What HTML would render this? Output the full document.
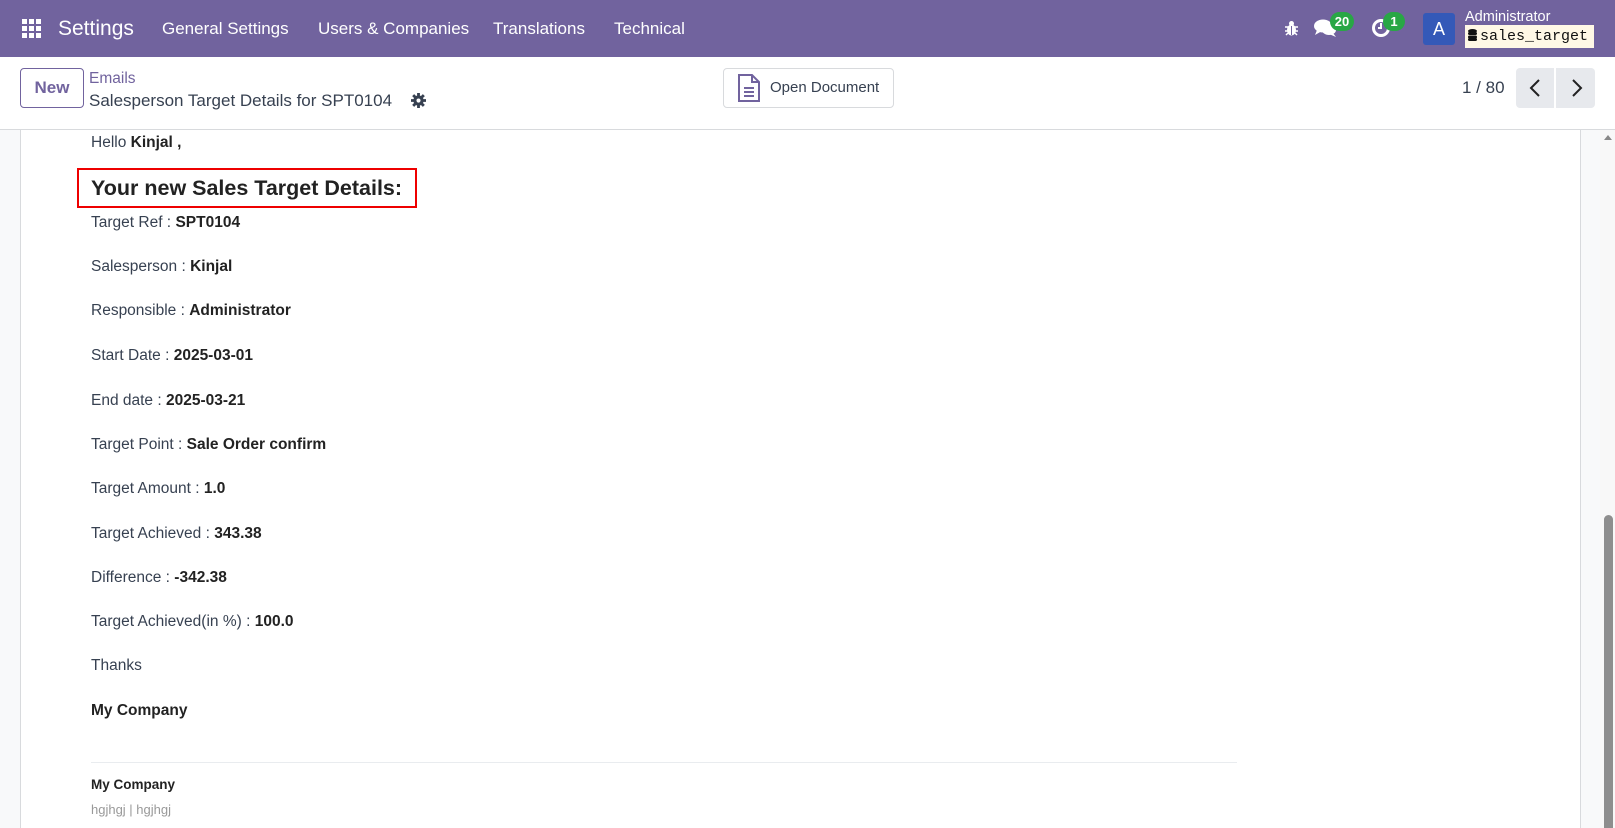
<!DOCTYPE html>
<html><head><meta charset="utf-8"><style>
*{box-sizing:border-box;margin:0;padding:0}
body{width:1615px;height:828px;overflow:hidden;font-family:"Liberation Sans",sans-serif;background:#f8f9fa;position:relative;color:#374151}
.nav{position:absolute;left:0;top:0;width:1615px;height:57px;background:#71639e;color:#fff}
.nav span{position:absolute;top:19px;font-size:17px}
.cp{position:absolute;left:0;top:57px;width:1615px;height:73px;background:#fff;border-bottom:1px solid #d8dadd}
.abs{position:absolute}
.content{position:absolute;left:20px;top:130px;width:1561px;height:698px;background:#fff;border-left:1px solid #d8dadd;border-right:1px solid #d8dadd}
.l{position:absolute;left:70px;font-size:15.5px;color:#374151}
.l b{color:#222}
</style></head><body>
<div class="nav">
  <svg class="abs" style="left:22px;top:19px" width="20" height="20" viewBox="0 0 20 20" fill="#fff"><rect x="0" y="0" width="5" height="5"/><rect x="7" y="0" width="5" height="5"/><rect x="14" y="0" width="5" height="5"/><rect x="0" y="7" width="5" height="5"/><rect x="7" y="7" width="5" height="5"/><rect x="14" y="7" width="5" height="5"/><rect x="0" y="14" width="5" height="5"/><rect x="7" y="14" width="5" height="5"/><rect x="14" y="14" width="5" height="5"/></svg>
  <span style="left:58px;top:17px;font-size:21px">Settings</span>
  <span style="left:162px">General Settings</span>
  <span style="left:318px">Users &amp; Companies</span>
  <span style="left:493px">Translations</span>
  <span style="left:614px">Technical</span>
  <svg class="abs" style="left:1284px;top:20px" width="15" height="16" viewBox="0 0 15 16" fill="#fff"><ellipse cx="7.5" cy="10" rx="4.5" ry="5.5"/><circle cx="7.5" cy="3.5" r="2.5"/><path d="M1 7h13M1 11h13M2 15l2-2M13 15l-2-2" stroke="#fff" stroke-width="1.5"/><path d="M7.5 6v9" stroke="#71639e" stroke-width="1"/></svg>
  <svg class="abs" style="left:1314px;top:18px" width="24" height="20" viewBox="0 0 24 20" fill="#fff"><ellipse cx="9" cy="8" rx="9" ry="6.5"/><path d="M3 12 L1 17 L8 13Z"/><ellipse cx="15" cy="12" rx="7" ry="5"/><path d="M19 15 L22 19 L15 16Z"/></svg>
  <div class="abs" style="left:1330px;top:12px;width:24px;height:19px;border-radius:10px;background:#28a745;font-size:13px;font-weight:bold;text-align:center;line-height:19px">20</div>
  <svg class="abs" style="left:1371px;top:18px" width="20" height="20" viewBox="0 0 20 20"><circle cx="10" cy="10" r="7.5" fill="none" stroke="#fff" stroke-width="3"/><path d="M10 5v5h-3" stroke="#fff" stroke-width="2" fill="none"/></svg>
  <div class="abs" style="left:1383px;top:12px;width:22px;height:19px;border-radius:10px;background:#28a745;font-size:13px;font-weight:bold;text-align:center;line-height:19px">1</div>
  <div class="abs" style="left:1423px;top:13px;width:32px;height:32px;border-radius:3px;background:#3459b8;font-size:18px;text-align:center;line-height:32px">A</div>
  <div class="abs" style="left:1465px;top:9px;font-size:14.5px">Administrator</div>
  <div class="abs" style="left:1465px;top:25px;width:129px;height:23px;background:#fff8e6;color:#111;font-family:'Liberation Mono',monospace;font-size:15px;line-height:23px;padding-left:3px">
    <svg width="9" height="12" viewBox="0 0 9 12" style="vertical-align:-1px;margin-right:3px"><ellipse cx="4.5" cy="2" rx="4.5" ry="2" fill="#111"/><rect x="0" y="3" width="9" height="3" rx="1.5" fill="#111"/><rect x="0" y="6.5" width="9" height="3" rx="1.5" fill="#111"/><rect x="0" y="9" width="9" height="3" rx="1.5" fill="#111"/></svg>sales_target</div>
</div>
<div class="cp">
  <div class="abs" style="left:20px;top:11px;width:64px;height:40px;border:1px solid #71639e;border-radius:4px;color:#71639e;font-size:17px;text-align:center;line-height:38px;font-weight:bold">New</div>
  <div class="abs" style="left:89px;top:13px;font-size:15.5px;color:#71639e">Emails</div>
  <div class="abs" style="left:89px;top:34px;font-size:17px;color:#374151">Salesperson Target Details for SPT0104</div>
  <svg class="abs" style="left:411px;top:36px" width="15" height="15" viewBox="0 0 16 16"><circle cx="8" cy="8" r="5.5" fill="#374151"/><path d="M8 0v16M0 8h16M2.3 2.3l11.4 11.4M13.7 2.3L2.3 13.7" stroke="#374151" stroke-width="3"/><circle cx="8" cy="8" r="2.2" fill="#fff"/></svg>
  <div class="abs" style="left:723px;top:11px;width:171px;height:40px;border:1px solid #d8dadd;border-radius:4px"></div>
  <svg class="abs" style="left:737px;top:17px" width="24" height="28" viewBox="0 0 24 28" fill="none" stroke="#71639e" stroke-width="2"><path d="M2 1h13l7 7v19H2z"/><path d="M15 1v7h7"/><path d="M7 14h10M7 18h10M7 22h10"/></svg>
  <div class="abs" style="left:770px;top:22px;font-size:15px;color:#374151">Open Document</div>
  <div class="abs" style="left:1462px;top:21px;font-size:17px;color:#374151">1 / 80</div>
  <div class="abs" style="left:1516px;top:11px;width:38px;height:40px;background:#e7e9ed;border-radius:4px 0 0 4px"></div>
  <div class="abs" style="left:1556px;top:11px;width:39px;height:40px;background:#e7e9ed;border-radius:0 4px 4px 0"></div>
  <svg class="abs" style="left:1529px;top:22px" width="12" height="18" viewBox="0 0 12 18"><path d="M10 1L2 9l8 8" stroke="#222" stroke-width="2" fill="none"/></svg>
  <svg class="abs" style="left:1571px;top:22px" width="12" height="18" viewBox="0 0 12 18"><path d="M2 1l8 8-8 8" stroke="#222" stroke-width="2" fill="none"/></svg>
</div>
<div class="content">
  <div class="l" style="top:4px">Hello <b>Kinjal ,</b></div>
  <div class="abs" style="left:56px;top:38px;width:340px;height:40px;border:2px solid #e00"></div>
  <div class="l" style="top:46px;font-size:21.5px;color:#222;font-weight:600">Your new Sales Target Details:</div>
  <div class="l" style="top:84px">Target Ref : <b>SPT0104</b></div>
  <div class="l" style="top:128px">Salesperson : <b>Kinjal</b></div>
  <div class="l" style="top:172px">Responsible : <b>Administrator</b></div>
  <div class="l" style="top:217px">Start Date : <b>2025-03-01</b></div>
  <div class="l" style="top:262px">End date : <b>2025-03-21</b></div>
  <div class="l" style="top:306px">Target Point : <b>Sale Order confirm</b></div>
  <div class="l" style="top:350px">Target Amount : <b>1.0</b></div>
  <div class="l" style="top:395px">Target Achieved : <b>343.38</b></div>
  <div class="l" style="top:439px">Difference : <b>-342.38</b></div>
  <div class="l" style="top:483px">Target Achieved(in %) : <b>100.0</b></div>
  <div class="l" style="top:527px">Thanks</div>
  <div class="l" style="top:572px"><b>My Company</b></div>
  <div class="abs" style="left:70px;top:632px;width:1146px;height:1px;background:#e9ecef"></div>
  <div class="l" style="top:647px;font-size:13.5px"><b>My Company</b></div>
  <div class="l" style="top:672px;font-size:13px;color:#999">hgjhgj | hgjhgj</div>
</div>
<div class="abs" style="left:1600px;top:130px;width:15px;height:698px;background:#f8f8f8"></div>
<svg class="abs" style="left:1604px;top:135px" width="8" height="5" viewBox="0 0 8 5"><path d="M0 5L4 0l4 5z" fill="#888"/></svg>
<div class="abs" style="left:1604px;top:515px;width:9px;height:313px;background:#8e8e8e;border-radius:5px 5px 0 0"></div>
</body></html>
